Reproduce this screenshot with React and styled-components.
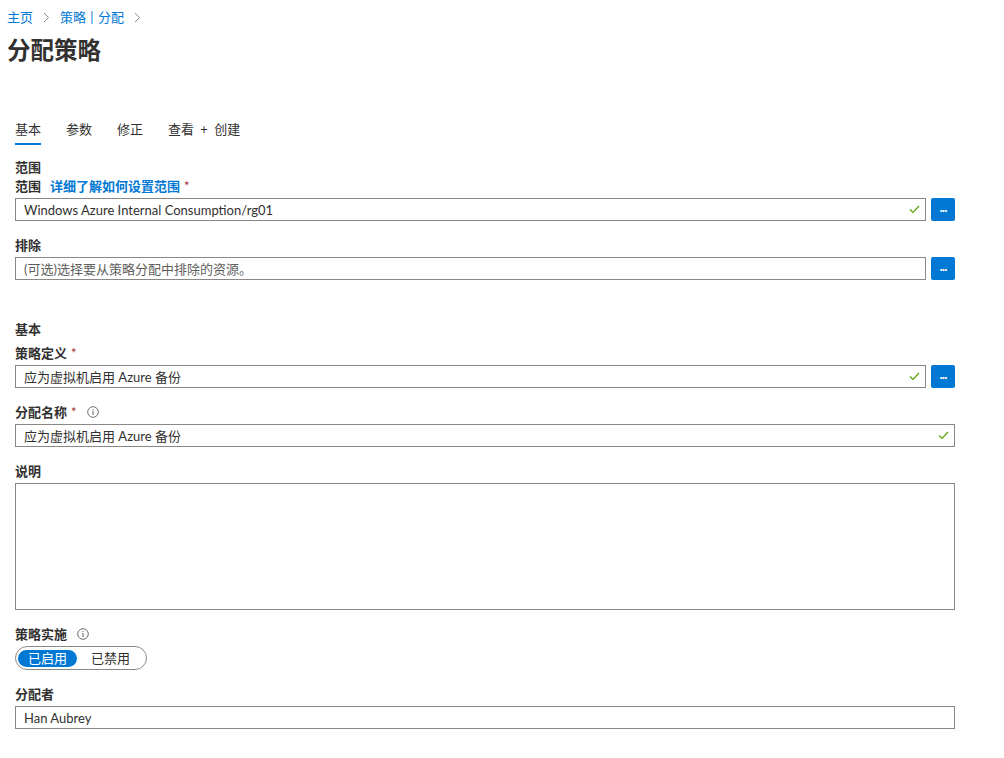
import React from "react";
import styled, { createGlobalStyle } from "styled-components";

const Global = createGlobalStyle`
  html, body { margin: 0; padding: 0; background: #fff; }
  body {
    font-family: "Segoe UI", "Lato", "Noto Sans CJK SC", sans-serif;
    font-size: 13px;
    color: #323130;
  }
  * { box-sizing: border-box; }
`;

const Page = styled.div`
  display: flex;
  flex-direction: column;
`;

const Header = styled.header`
  padding: 9px 7px 0;
  display: flex;
  flex-direction: column;
`;

const Crumbs = styled.nav`
  display: flex;
  align-items: center;
  gap: 10px;
  line-height: 16px;
  font-size: 13px;
`;

const Crumb = styled.a`
  color: #0078d4;
  text-decoration: none;
  word-spacing: 1px;
`;

const Title = styled.h1`
  margin: 9px 0 0;
  font-size: 23.5px;
  line-height: 32px;
  font-weight: 700;
  color: #323130;
`;

const Tabs = styled.div`
  display: flex;
  gap: 25px;
  margin: 55px 15px 0;
`;

const Tab = styled.div`
  line-height: 16px;
  padding-bottom: 6px;
  border-bottom: 2px solid ${(p) => (p.$active ? "#0078d4" : "transparent")};
  color: #323130;
  word-spacing: 3px;
`;

const Form = styled.div`
  width: 970px;
  padding: 0 15px 0;
  display: flex;
  flex-direction: column;
`;

const SectionTitle = styled.div`
  font-weight: 700;
  line-height: 16px;
  margin-top: ${(p) => p.$top}px;
  margin-bottom: ${(p) => p.$bottom}px;
`;

const Field = styled.div`
  display: flex;
  flex-direction: column;
  margin-bottom: 16px;
`;

const Label = styled.label`
  display: flex;
  align-items: center;
  gap: 4px;
  font-weight: 700;
  line-height: 16px;
  margin-bottom: 4px;
`;

const Req = styled.span`
  color: #a4262c;
  font-weight: 400;
`;

const LabelLink = styled.a`
  color: #0078d4;
  margin-left: 5px;
  text-decoration: none;
`;

const Info = styled.span`
  display: inline-flex;
  margin-left: 6px;
  color: #605e5c;
`;

const Row = styled.div`
  display: flex;
  gap: 5px;
`;

const InputBox = styled.div`
  flex: 1;
  height: 23px;
  border: 1px solid #8a8886;
  display: flex;
  align-items: center;
  padding: 0 5px 0 8px;
  color: ${(p) => (p.$placeholder ? "#605e5c" : "#323130")};
  white-space: nowrap;
`;

const InputText = styled.span`
  flex: 1;
`;

const BrowseButton = styled.button`
  width: 24px;
  height: 23px;
  border: none;
  border-radius: 2px;
  background: #0078d4;
  color: #fff;
  font-weight: 700;
  font-size: 12px;
  line-height: 1;
  padding: 0 0 4px;
  display: flex;
  align-items: center;
  justify-content: center;
  font-family: "Liberation Sans", sans-serif;
  letter-spacing: -1px;
`;

const TextArea = styled.div`
  height: 127px;
  border: 1px solid #8a8886;
`;

const Toggle = styled.div`
  display: flex;
  align-items: center;
  width: 132px;
  height: 24px;
  border: 1px solid #8a8886;
  border-radius: 12px;
  padding: 0 2px;
`;

const ToggleOption = styled.div`
  height: 17px;
  width: ${(p) => (p.$active ? 62 : 70)}px;
  border-radius: 9px;
  display: flex;
  align-items: center;
  justify-content: center;
  background: ${(p) => (p.$active ? "#0078d4" : "transparent")};
  color: ${(p) => (p.$active ? "#fff" : "#323130")};
  line-height: 17px;
`;

const Chevron = () => (
  <svg width="7" height="11" viewBox="0 0 7 11">
    <path d="M1 1l4.5 4.5L1 10" fill="none" stroke="#8a8886" strokeWidth="1" />
  </svg>
);

const Check = () => (
  <svg width="11" height="9" viewBox="0 0 11 9">
    <path d="M1 4.5l3 3L10 1" fill="none" stroke="#57a300" strokeWidth="1.2" />
  </svg>
);

const InfoIcon = () => (
  <svg width="12" height="12" viewBox="0 0 12 12">
    <circle cx="6" cy="6" r="5.3" fill="none" stroke="#605e5c" strokeWidth="0.9" />
    <rect x="5.5" y="5" width="1" height="4" fill="#605e5c" />
    <rect x="5.5" y="3" width="1" height="1" fill="#605e5c" />
  </svg>
);

const Input = ({ value, placeholder, valid, browse }) => (
  <Row>
    <InputBox $placeholder={!value}>
      <InputText>{value || placeholder}</InputText>
      {valid && <Check />}
    </InputBox>
    {browse && <BrowseButton>...</BrowseButton>}
  </Row>
);

export default function App() {
  return (
    <Page>
      <Global />
      <Header>
        <Crumbs>
          <Crumb>主页</Crumb>
          <Chevron />
          <Crumb>策略 | 分配</Crumb>
          <Chevron />
        </Crumbs>
        <Title>分配策略</Title>
      </Header>
      <Tabs>
        <Tab $active>基本</Tab>
        <Tab>参数</Tab>
        <Tab>修正</Tab>
        <Tab>查看 + 创建</Tab>
      </Tabs>
      <Form>
        <SectionTitle $top={14} $bottom={3}>范围</SectionTitle>
        <Field>
          <Label>
            范围<LabelLink>详细了解如何设置范围</LabelLink>
            <Req>*</Req>
          </Label>
          <Input value="Windows Azure Internal Consumption/rg01" valid browse />
        </Field>
        <Field>
          <Label>排除</Label>
          <Input placeholder="(可选)选择要从策略分配中排除的资源。" browse />
        </Field>
        <SectionTitle $top={25} $bottom={8}>基本</SectionTitle>
        <Field>
          <Label>
            策略定义<Req>*</Req>
          </Label>
          <Input value="应为虚拟机启用 Azure 备份" valid browse />
        </Field>
        <Field>
          <Label>
            分配名称<Req>*</Req>
            <Info>
              <InfoIcon />
            </Info>
          </Label>
          <Input value="应为虚拟机启用 Azure 备份" valid />
        </Field>
        <Field>
          <Label>说明</Label>
          <TextArea />
        </Field>
        <Field>
          <Label>
            策略实施
            <Info>
              <InfoIcon />
            </Info>
          </Label>
          <Toggle>
            <ToggleOption $active>已启用</ToggleOption>
            <ToggleOption>已禁用</ToggleOption>
          </Toggle>
        </Field>
        <Field>
          <Label>分配者</Label>
          <Input value="Han Aubrey" />
        </Field>
      </Form>
    </Page>
  );
}
